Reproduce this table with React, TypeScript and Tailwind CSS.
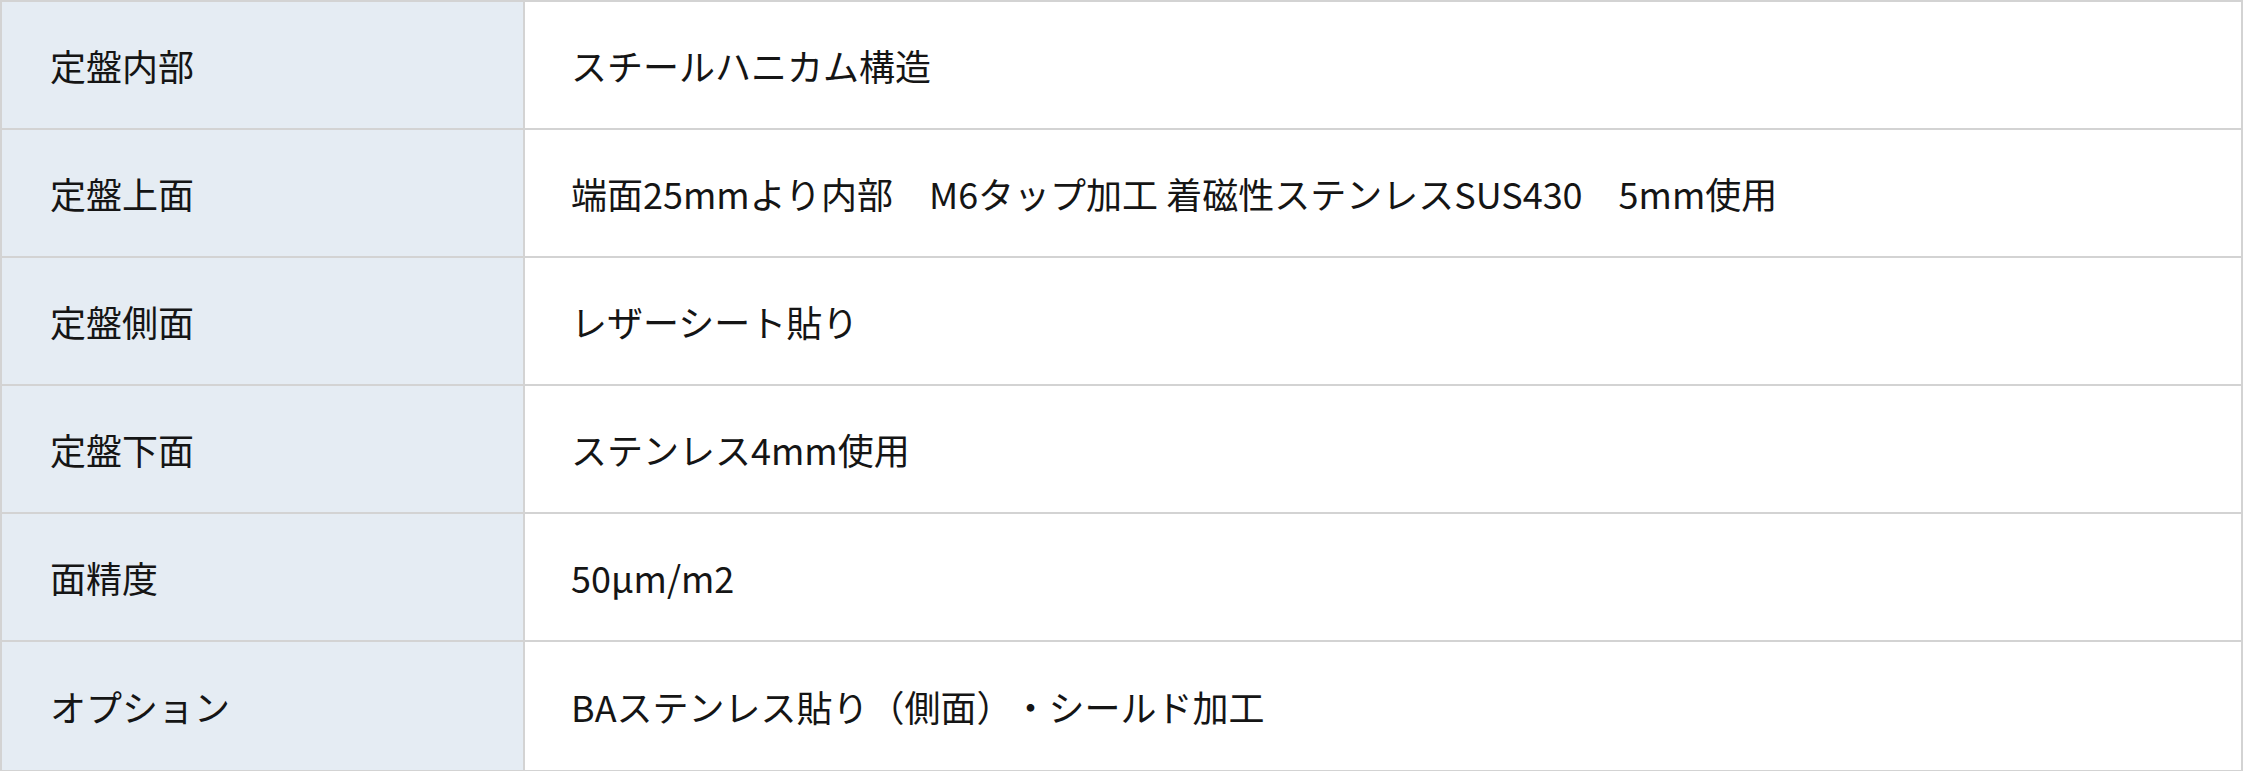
import React from "react";

const rows: [string, string][] = [
  ["定盤内部", "スチールハニカム構造"],
  ["定盤上面", "端面25mmより内部　M6タップ加工 着磁性ステンレスSUS430　5mm使用"],
  ["定盤側面", "レザーシート貼り"],
  ["定盤下面", "ステンレス4mm使用"],
  ["面精度", "50μm/m2"],
  ["オプション", "BAステンレス貼り（側面）・シールド加工"],
];

export default function App() {
  return (
    <div
      className="w-[2243px] bg-white text-[#151515] text-[36px] leading-none [text-spacing-trim:space-all]"
      style={{ fontFamily: '"Noto Sans CJK JP", "Noto Sans", sans-serif' }}
    >
      <div className="border-2 border-b-[3px] border-[#d3d3d3]">
        {rows.map(([k, v], i) => (
          <div
            key={k}
            className={`flex h-[128px] ${i < rows.length - 1 ? "border-b-2 border-[#d3d3d3]" : ""}`}
          >
            <div className="w-[523px] shrink-0 bg-[#e5ecf3] border-r-2 border-[#d3d3d3] flex items-center pl-[48px]">
              {k}
            </div>
            <div className="flex-1 flex items-center pl-[46px]">{v}</div>
          </div>
        ))}
      </div>
    </div>
  );
}
